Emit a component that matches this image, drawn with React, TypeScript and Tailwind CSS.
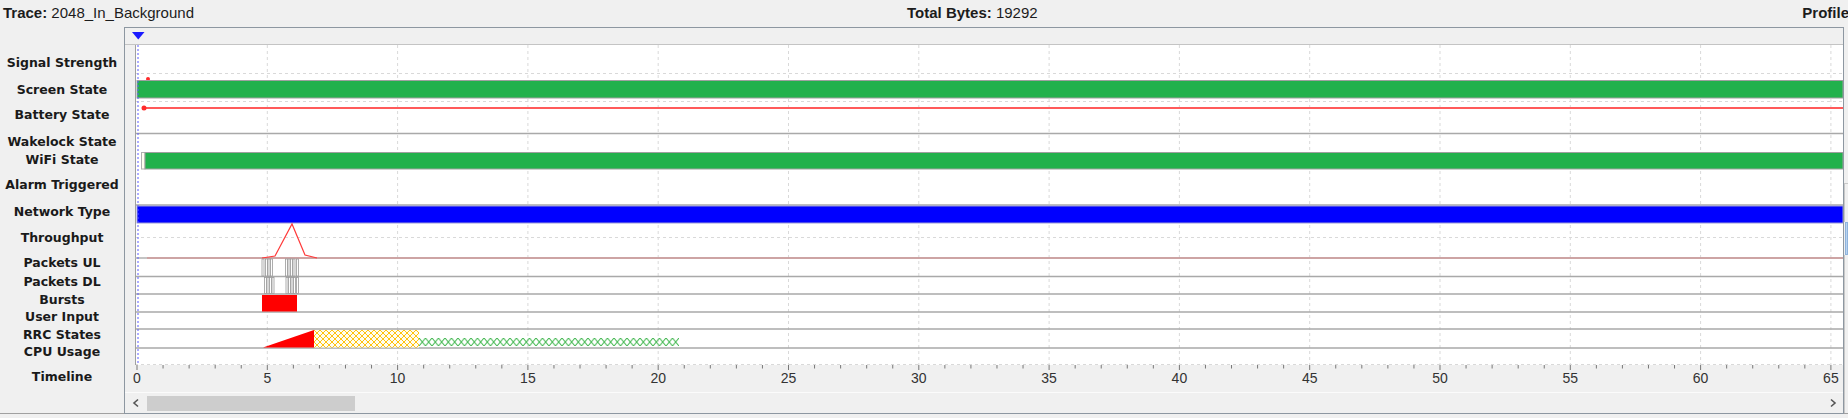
import React from "react";

const T0 = 137;
const PX = 26.06;
const tx = (t: number) => T0 + t * PX;

const labels: { text: string; cls: string }[] = [
  { text: "Signal Strength", cls: "mt-[29px]" },
  { text: "Screen State", cls: "mt-[13px]" },
  { text: "Battery State", cls: "mt-[11px]" },
  { text: "Wakelock State", cls: "mt-[13px]" },
  { text: "WiFi State", cls: "mt-[4px]" },
  { text: "Alarm Triggered", cls: "mt-[11px]" },
  { text: "Network Type", cls: "mt-[13px]" },
  { text: "Throughput", cls: "mt-[12px]" },
  { text: "Packets UL", cls: "mt-[11px]" },
  { text: "Packets DL", cls: "mt-[5px]" },
  { text: "Bursts", cls: "mt-[4px]" },
  { text: "User Input", cls: "mt-[3px]" },
  { text: "RRC States", cls: "mt-[4px]" },
  { text: "CPU Usage", cls: "mt-[3px]" },
  { text: "Timeline", cls: "mt-[11px]" },
];

const majors = Array.from({ length: 14 }, (_, i) => i * 5);
const minors = Array.from({ length: 66 }, (_, i) => i);

const ulMarks = [262, 265.5, 268, 270.5, 285.5, 288, 290.5, 293, 296.5];
const dlMarks = [264.5, 267, 269.5, 272, 286, 288.5, 291, 293.5, 296.5];

function Plot() {
  const sep = "#a9a9a9";
  const dash = "#d9d9d9";
  return (
    <svg width={1708} height={320} viewBox="135 45 1708 320" className="block">
      <defs>
        <pattern id="yel" width="6" height="6" patternUnits="userSpaceOnUse" x="314" y="330">
          <rect width="6" height="6" fill="#fffdf0" />
          <path d="M0 0L6 6M6 0L0 6" stroke="#ffc20e" strokeWidth="1" />
        </pattern>
        <pattern id="grn" width="6.5" height="8" patternUnits="userSpaceOnUse" x="419" y="338">
          <path d="M0 0L6.5 8M6.5 0L0 8" stroke="#3cb54a" strokeWidth="1" />
        </pattern>
      </defs>
      <rect x={135} y={45} width={1708} height={320} fill="#ffffff" />
      {majors.slice(1).map((t) => (
        <line key={t} x1={tx(t)} x2={tx(t)} y1={45} y2={365} stroke={dash} strokeDasharray="3 3" />
      ))}
      {[73.5, 101.5, 237.5, 364.5].map((y) => (
        <line key={y} x1={135} x2={1843} y1={y} y2={y} stroke={dash} strokeDasharray="3 3" />
      ))}
      {[133.5, 205, 276.5, 294, 312, 329, 348].map((y) => (
        <line key={y} x1={135} x2={1843} y1={y} y2={y} stroke={sep} strokeWidth={1.5} />
      ))}
      <line x1={135.5} x2={135.5} y1={45} y2={365} stroke="#a0a0a0" />

      <circle cx={148} cy={79} r={2} fill="#ff2a2a" />
      <rect x={137} y={80.5} width={1706} height={17.5} fill="#22b14c" stroke="#a0a0a0" />
      <line x1={144} x2={1843} y1={108} y2={108} stroke="#ff5a5a" strokeWidth={2} />
      <circle cx={144} cy={108} r={2.5} fill="#ff2a2a" />
      <rect x={141.5} y={152.5} width={3.5} height={16.5} fill="#fffff0" stroke="#b0b0b0" />
      <rect x={145} y={152.5} width={1698} height={16.5} fill="#22b14c" stroke="#a0a0a0" />
      <rect x={137} y={206} width={1706} height={17} fill="#0000ff" stroke="#9a9ad8" />
      <line x1={135} x2={1843} y1={258} y2={258} stroke="#b0b0b0" strokeWidth={1.5} />
      <line x1={147} x2={1843} y1={258} y2={258} stroke="#d09a9a" strokeWidth={1.5} />
      <polyline
        points="262,258 275,256 292,224 305,255 317,258"
        fill="none"
        stroke="#ff3a3a"
        strokeWidth={1.2}
      />
      {ulMarks.map((x, i) => (
        <rect key={"u" + i} x={x} y={259} width={2} height={17} fill="#ffffff" stroke="#9a9a9a" strokeWidth={0.8} />
      ))}
      {dlMarks.map((x, i) => (
        <rect key={"d" + i} x={x} y={277.5} width={2} height={16} fill="#ffffff" stroke="#9a9a9a" strokeWidth={0.8} />
      ))}
      <rect x={262} y={295} width={35} height={16.5} fill="#ff0000" />
      <polygon points="263,347.5 314,330 314,347.5" fill="#ff0000" />
      <rect x={314} y={330} width={105} height={17.5} fill="url(#yel)" />
      <rect x={419} y={338} width={260} height={8} fill="url(#grn)" />
      <line x1={138} x2={138} y1={45} y2={365} stroke="#5a5aff" strokeDasharray="2 2" />
    </svg>
  );
}

function Axis() {
  return (
    <svg width={1708} height={27} viewBox="135 365 1708 27" className="block overflow-visible">
      {minors.map((t) => (
        <line
          key={t}
          x1={tx(t)}
          x2={tx(t)}
          y1={365}
          y2={t % 5 === 0 ? 370 : 368.5}
          stroke="#777777"
        />
      ))}
      {majors.map((t) => (
        <text
          key={t}
          x={tx(t)}
          y={382.5}
          textAnchor="middle"
          fontFamily="'Liberation Sans', Arial, sans-serif"
          fontSize={14}
          fill="#333333"
        >
          {t}
        </text>
      ))}
    </svg>
  );
}

export default function App() {
  return (
    <div className="w-[1848px] h-[418px] overflow-hidden bg-[#f0f0f0] font-['Liberation_Sans',Arial,sans-serif] text-[#1c1c1c]">
      <div className="h-[27px] flex items-start pt-[4px] text-[15px] leading-[17px] whitespace-nowrap">
        <div className="w-[907px] pl-[3px]">
          <span className="font-bold">Trace:</span> 2048_In_Background
        </div>
        <div>
          <span className="font-bold">Total Bytes:</span> 19292
        </div>
        <div className="flex-1 flex justify-end mr-[-1px] overflow-visible">
          <span className="font-bold">Profile</span>
        </div>
      </div>

      <div className="flex h-[387px]">
        <div className="w-[124px] h-full border-b border-[#a0a0a0] flex flex-col items-center font-['DejaVu_Sans',sans-serif] font-bold text-[12.5px] leading-[14px] text-[#1a1a1a]">
          {labels.map((l) => (
            <div key={l.text} className={"h-[14px] whitespace-nowrap " + l.cls}>
              {l.text}
            </div>
          ))}
        </div>

        <div className="w-[1720px] h-full border border-[#8d97a1] flex flex-col">
          <div className="h-[17px] border-b border-[#c4c4c4] flex items-start pl-[7px] pt-[4px]">
            <svg width="13" height="8" viewBox="0 0 13 8" className="block">
              <polygon points="0,0 12.5,0 6.25,7.5" fill="#1a1aff" />
            </svg>
          </div>
          <div className="h-[320px] flex">
            <div className="w-[10px]" />
            <Plot />
          </div>
          <div className="h-[27px] flex">
            <div className="w-[10px]" />
            <Axis />
          </div>
          <div className="h-[21px] border-t border-[#fbfbfb] flex items-center">
            <div className="w-[21px] h-full flex items-center justify-center">
              <svg width="8" height="10" viewBox="0 0 8 10">
                <polyline points="6,1.5 2,5 6,8.5" fill="none" stroke="#555555" strokeWidth="1.6" />
              </svg>
            </div>
            <div className="flex-1 h-full flex items-center">
              <div className="ml-[1px] w-[208px] h-[15px] bg-[#cdcdcd]" />
            </div>
            <div className="w-[21px] h-full flex items-center justify-center">
              <svg width="8" height="10" viewBox="0 0 8 10">
                <polyline points="2,1.5 6,5 2,8.5" fill="none" stroke="#555555" strokeWidth="1.6" />
              </svg>
            </div>
          </div>
        </div>

        <div className="w-[4px] h-full border-b border-[#a0a0a0] flex flex-col">
          <div className="h-[156px]" />
          <div className="h-[39px] border-l border-t border-[#c8c8c8]" />
          <div className="h-[33px] ml-[1px] bg-[#b9d4f0] border border-[#8fb3dc]" />
          <div className="flex-1 border-l border-[#c8c8c8]" />
        </div>
      </div>
    </div>
  );
}
